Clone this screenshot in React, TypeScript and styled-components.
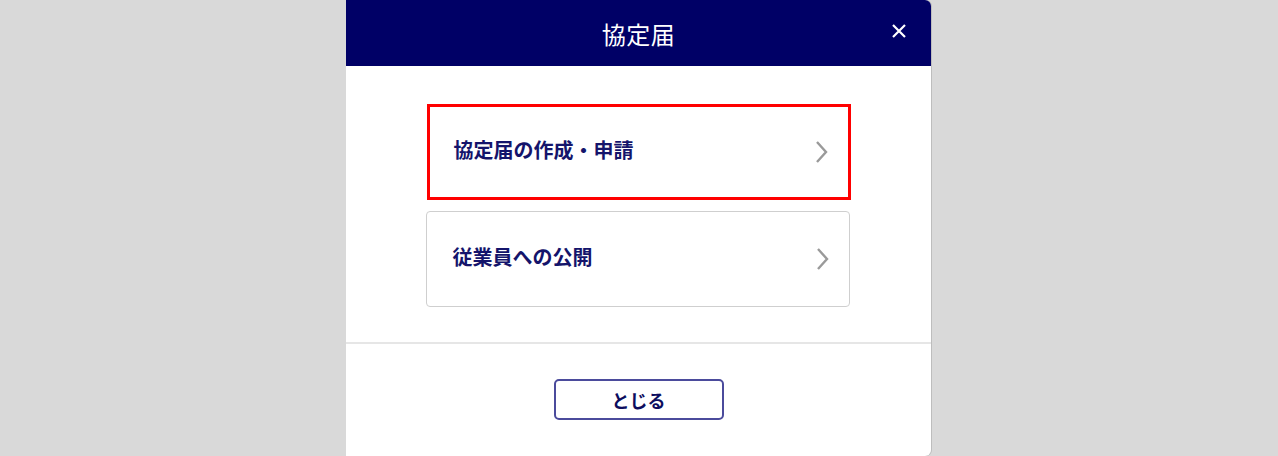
import styled, { createGlobalStyle } from "styled-components";

const GlobalStyle = createGlobalStyle`
  html, body {
    margin: 0;
    padding: 0;
    background: #d9d9d9;
    font-family: "Noto Sans CJK JP", "Noto Sans", sans-serif;
  }
`;

const Page = styled.div`
  width: 1278px;
  height: 456px;
  overflow: hidden;
  display: flex;
  padding-left: 346px;
  box-sizing: border-box;
`;

const Dialog = styled.div`
  width: 585px;
  height: 456px;
  background: #fff;
  border-radius: 0 6px 6px 0;
  box-shadow: 1px 0 0 #bdbdbd;
  display: flex;
  flex-direction: column;
  overflow: hidden;
`;

const Header = styled.div`
  height: 66px;
  background: #000066;
  color: #fff;
  display: flex;
  align-items: center;
  justify-content: center;
  position: relative;
  flex-shrink: 0;
`;

const Title = styled.h1`
  margin: 0;
  font-size: 24px;
  font-weight: 400;
  letter-spacing: 0.5px;
`;

const CloseButton = styled.button`
  position: absolute;
  right: 23px;
  top: 22px;
  width: 18px;
  height: 18px;
  padding: 0;
  border: none;
  background: none;
  display: flex;
  align-items: center;
  justify-content: center;
  cursor: pointer;
`;

const Body = styled.div`
  padding: 38px 0 35px;
  display: flex;
  flex-direction: column;
  align-items: center;
  gap: 11px;
  border-bottom: 2px solid #e6e6e6;
`;

const MenuItem = styled.button<{ $highlight?: boolean }>`
  width: 424px;
  height: 96px;
  box-sizing: border-box;
  display: flex;
  align-items: center;
  justify-content: space-between;
  padding: 0 19px 0 ${({ $highlight }) => ($highlight ? "24px" : "26px")};
  margin-left: ${({ $highlight }) => ($highlight ? "0" : "-2px")};
  background: #fff;
  border: ${({ $highlight }) => ($highlight ? "3px solid #ff0000" : "1px solid #cfcfcf")};
  border-radius: ${({ $highlight }) => ($highlight ? "0" : "4px")};
  cursor: pointer;
  font-family: inherit;
`;

const ItemLabel = styled.span`
  font-size: 20px;
  line-height: 1;
  font-weight: 700;
  color: #14146b;
  margin-top: -4px;
`;

const Footer = styled.div`
  flex: 1;
  display: flex;
  align-items: flex-start;
  justify-content: center;
  padding-top: 35px;
`;

const CloseAction = styled.button`
  width: 170px;
  height: 41px;
  box-sizing: border-box;
  background: #fff;
  border: 2px solid #4b4b9c;
  border-radius: 5px;
  font-family: inherit;
  font-size: 18px;
  font-weight: 700;
  color: #0d0d5e;
  cursor: pointer;
`;

function Chevron() {
  return (
    <svg width="15" height="24" viewBox="0 0 15 24">
      <path d="M3 2 L12 12 L3 22" fill="none" stroke="#9a9a9a" strokeWidth="2.4" />
    </svg>
  );
}

function CrossIcon() {
  return (
    <svg width="16" height="16" viewBox="0 0 16 16">
      <path d="M2 2 L14 14 M14 2 L2 14" stroke="#fff" strokeWidth="2.2" />
    </svg>
  );
}

const items = [
  { label: "協定届の作成・申請", highlight: true },
  { label: "従業員への公開", highlight: false },
];

export default function App() {
  return (
    <>
      <GlobalStyle />
      <Page>
        <Dialog>
          <Header>
            <Title>協定届</Title>
            <CloseButton aria-label="close">
              <CrossIcon />
            </CloseButton>
          </Header>
          <Body>
            {items.map((item) => (
              <MenuItem key={item.label} $highlight={item.highlight}>
                <ItemLabel>{item.label}</ItemLabel>
                <Chevron />
              </MenuItem>
            ))}
          </Body>
          <Footer>
            <CloseAction>とじる</CloseAction>
          </Footer>
        </Dialog>
      </Page>
    </>
  );
}
